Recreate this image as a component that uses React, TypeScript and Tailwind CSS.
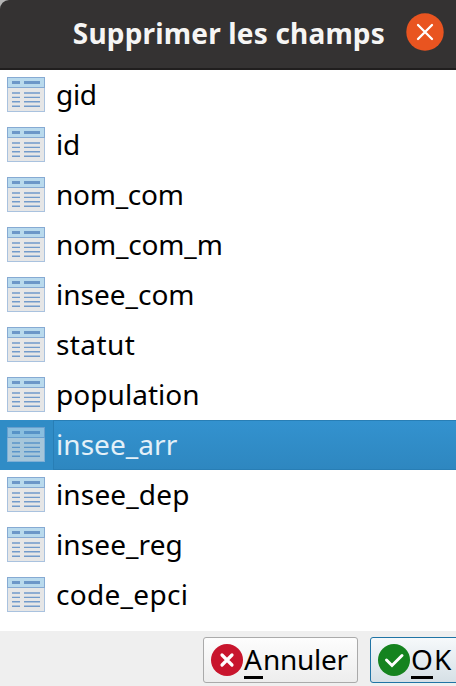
import React from "react";

const fields: { name: string; tracking: string }[] = [
  { name: "gid", tracking: "tracking-[-0.3px]" },
  { name: "id", tracking: "tracking-[-0.3px]" },
  { name: "nom_com", tracking: "tracking-[-0.25px]" },
  { name: "nom_com_m", tracking: "tracking-[-0.15px]" },
  { name: "insee_com", tracking: "tracking-[0px]" },
  { name: "statut", tracking: "tracking-[0.4px]" },
  { name: "population", tracking: "tracking-[0.05px]" },
  { name: "insee_arr", tracking: "tracking-[0.05px]" },
  { name: "insee_dep", tracking: "tracking-[0.15px]" },
  { name: "insee_reg", tracking: "tracking-[0.1px]" },
  { name: "code_epci", tracking: "tracking-[0.3px]" },
];

const SELECTED = "insee_arr";

function TableIcon({ dimmed }: { dimmed: boolean }) {
  return (
    <svg width="38" height="35" viewBox="0 0 38 35" className={dimmed ? "opacity-65" : ""}>
      <rect x="0.5" y="0.5" width="37" height="34" fill="#e6e6e6" stroke="#a9c2df" />
      <rect x="0.5" y="0.5" width="37" height="10" fill="#b9daed" stroke="#86aad3" />
      <path d="M5 5.5H13M17 5.5H33" stroke="#6c97c8" strokeWidth="3" />
      <path d="M5 16H13M17 16H33M5 20.4H13M17 20.4H33M5 24.8H13M17 24.8H33M5 29.2H13M17 29.2H33" stroke="#729bcb" strokeWidth="1.4" />
    </svg>
  );
}

function FieldRow({ name, tracking }: { name: string; tracking: string }) {
  const selected = name === SELECTED;
  return (
    <li
      className={
        "flex h-[50px] items-center pl-[7px] " +
        (selected ? "bg-[#308cc6] text-[#e3f0f8]" : "text-black")
      }
    >
      <span className="flex w-[46px] shrink-0 pb-[2px]">
        <TableIcon dimmed={selected} />
      </span>
      <span
        className={
          "flex h-full flex-1 items-center border-l pb-[2px] pl-[2px] text-[28px] leading-[48px] " +
          tracking +
          (selected ? " border-y border-[#287eb5] bg-linear-to-b from-[#3392cf] to-[#2e87c0]" : " border-transparent")
        }
      >
        <span>{name}</span>
      </span>
    </li>
  );
}

export default function App() {
  return (
    <div className="flex h-[686px] w-[456px] flex-col overflow-hidden bg-white font-['Noto_Sans','Open_Sans',sans-serif]">
      <div className="bg-[#b5b5b5]">
        <header className="flex h-[70px] items-center justify-end rounded-tl-[9px] border-b-2 border-[#201e1e] bg-[#343232] pr-[12px] pb-[4px]">
          <h1 className="mr-[21px] whitespace-nowrap pt-[2px] text-[28px] font-bold leading-[40px] tracking-[0.18px] text-[#f6f5f4]">
            Supprimer les champs
          </h1>
          <svg width="38" height="38" viewBox="0 0 38 38" className="shrink-0">
            <circle cx="19" cy="19" r="18.7" fill="#e95420" />
            <path d="M12 12L26 26M26 12L12 26" stroke="#fff" strokeWidth="2.3" strokeLinecap="round" />
          </svg>
        </header>
      </div>
      <ul className="h-[561px] shrink-0">
        {fields.map((f) => (
          <FieldRow key={f.name} name={f.name} tracking={f.tracking} />
        ))}
      </ul>
      <footer className="flex h-[55px] shrink-0 bg-[#efefef] pt-[6px] pl-[203px]">
        <button className="flex h-[46px] w-[155px] shrink-0 items-center rounded-[3px] border border-[#aaaaaa] bg-linear-to-b from-[#fdfdfd] to-[#ededed] pl-[7px] text-[28px]">
          <svg width="32" height="32" viewBox="0 0 32 32" className="shrink-0">
            <circle cx="16" cy="16" r="16" fill="#c8152d" />
            <path d="M11 11L21 21M21 11L11 21" stroke="#fff" strokeWidth="3.2" strokeLinecap="round" />
          </svg>
          <span className="ml-[1px] flex tracking-[-0.3px]">
            <span className="flex h-[37px] w-[19px] items-center border-b-[3px] border-black">A</span>
            <span className="flex h-[37px] items-center border-b-[3px] border-transparent">nnuler</span>
          </span>
        </button>
        <button className="ml-[12px] flex h-[46px] w-[97px] shrink-0 items-center rounded-[3px] border border-[#2074a5] bg-linear-to-b from-[#f6f9fb] to-[#d6e0e6] pl-[7px] text-[28px]">
          <svg width="32" height="32" viewBox="0 0 32 32" className="shrink-0">
            <circle cx="16" cy="16" r="16" fill="#15831f" />
            <path d="M8.5 16L14 21.5L24 11.5" stroke="#fff" strokeWidth="3" fill="none" strokeLinecap="round" />
          </svg>
          <span className="ml-[1px] flex">
            <span className="flex h-[37px] w-[22px] items-center border-b-[3px] border-black">O</span>
            <span className="ml-[1px] flex h-[37px] items-center border-b-[3px] border-transparent">K</span>
          </span>
        </button>
      </footer>
    </div>
  );
}
